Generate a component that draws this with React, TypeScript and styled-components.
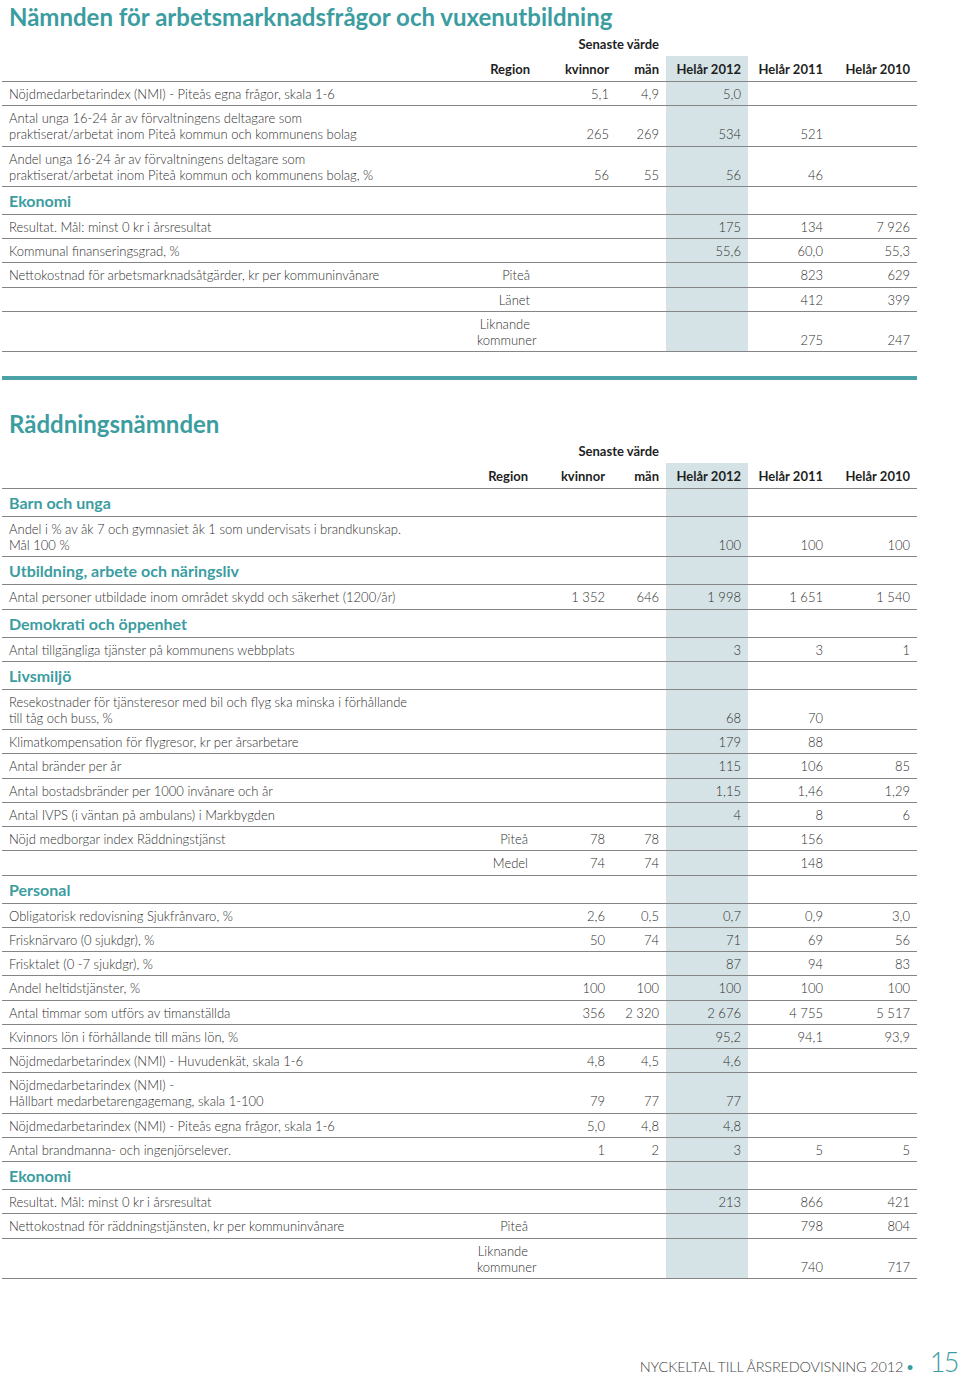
import React from "react";
import styled, { createGlobalStyle } from "styled-components";

const Global = createGlobalStyle`
  html, body { margin: 0; padding: 0; overflow: hidden; background: #fff; }
  body { font-family: "Lato", "Open Sans", sans-serif; color: #2b2b2b; }
`;

const TEAL = "#3c9da1";
const SHADE = "#d5e3e6";
const LINE = "#858585";

type DataRow = {
  kind: "data";
  label: string[];
  region?: string[];
  v: [string, string, string, string, string];
};
type SectionRow = { kind: "section"; label: string };
type Row = DataRow | SectionRow;

const d = (label: string[], v: [string, string, string, string, string], region?: string[]): DataRow => ({
  kind: "data",
  label,
  v,
  region,
});
const s = (label: string): SectionRow => ({ kind: "section", label });

const table1: Row[] = [
  d(["Nöjdmedarbetarindex (NMI) - Piteås egna frågor, skala 1-6"], ["5,1", "4,9", "5,0", "", ""]),
  d(
    ["Antal unga 16-24 år av förvaltningens deltagare som", "praktiserat/arbetat inom Piteå kommun och kommunens bolag"],
    ["265", "269", "534", "521", ""]
  ),
  d(
    ["Andel unga 16-24 år av förvaltningens deltagare som", "praktiserat/arbetat inom Piteå kommun och kommunens bolag, %"],
    ["56", "55", "56", "46", ""]
  ),
  s("Ekonomi"),
  d(["Resultat. Mål: minst 0 kr i årsresultat"], ["", "", "175", "134", "7 926"]),
  d(["Kommunal finanseringsgrad, %"], ["", "", "55,6", "60,0", "55,3"]),
  d(["Nettokostnad för arbetsmarknadsåtgärder, kr per kommuninvånare"], ["", "", "", "823", "629"], ["Piteå"]),
  d([""], ["", "", "", "412", "399"], ["Länet"]),
  d([""], ["", "", "", "275", "247"], ["Liknande", "kommuner"]),
];

const table2: Row[] = [
  s("Barn och unga"),
  d(
    ["Andel i % av åk 7 och gymnasiet åk 1 som undervisats i brandkunskap.", "Mål 100 %"],
    ["", "", "100", "100", "100"]
  ),
  s("Utbildning, arbete och näringsliv"),
  d(["Antal personer utbildade inom området skydd och säkerhet (1200/år)"], ["1 352", "646", "1 998", "1 651", "1 540"]),
  s("Demokrati och öppenhet"),
  d(["Antal tillgängliga tjänster på kommunens webbplats"], ["", "", "3", "3", "1"]),
  s("Livsmiljö"),
  d(
    ["Resekostnader för tjänsteresor med bil och flyg ska minska i förhållande", "till tåg och buss, %"],
    ["", "", "68", "70", ""]
  ),
  d(["Klimatkompensation för flygresor, kr per årsarbetare"], ["", "", "179", "88", ""]),
  d(["Antal bränder per år"], ["", "", "115", "106", "85"]),
  d(["Antal bostadsbränder per 1000 invånare och år"], ["", "", "1,15", "1,46", "1,29"]),
  d(["Antal IVPS (i väntan på ambulans) i Markbygden"], ["", "", "4", "8", "6"]),
  d(["Nöjd medborgar index Räddningstjänst"], ["78", "78", "", "156", ""], ["Piteå"]),
  d([""], ["74", "74", "", "148", ""], ["Medel"]),
  s("Personal"),
  d(["Obligatorisk redovisning Sjukfrånvaro, %"], ["2,6", "0,5", "0,7", "0,9", "3,0"]),
  d(["Frisknärvaro (0 sjukdgr), %"], ["50", "74", "71", "69", "56"]),
  d(["Frisktalet (0 -7 sjukdgr), %"], ["", "", "87", "94", "83"]),
  d(["Andel heltidstjänster, %"], ["100", "100", "100", "100", "100"]),
  d(["Antal timmar som utförs av timanställda"], ["356", "2 320", "2 676", "4 755", "5 517"]),
  d(["Kvinnors lön i förhållande till mäns lön, %"], ["", "", "95,2", "94,1", "93,9"]),
  d(["Nöjdmedarbetarindex (NMI) - Huvudenkät, skala 1-6"], ["4,8", "4,5", "4,6", "", ""]),
  d(["Nöjdmedarbetarindex (NMI) -", "Hållbart medarbetarengagemang, skala 1-100"], ["79", "77", "77", "", ""]),
  d(["Nöjdmedarbetarindex (NMI) - Piteås egna frågor, skala 1-6"], ["5,0", "4,8", "4,8", "", ""]),
  d(["Antal brandmanna- och ingenjörselever."], ["1", "2", "3", "5", "5"]),
  s("Ekonomi"),
  d(["Resultat. Mål: minst 0 kr i årsresultat"], ["", "", "213", "866", "421"]),
  d(["Nettokostnad för räddningstjänsten, kr per kommuninvånare"], ["", "", "", "798", "804"], ["Piteå"]),
  d([""], ["", "", "", "740", "717"], ["Liknande", "kommuner"]),
];

const Page = styled.div`
  width: 960px;
  height: 1377px;
  box-sizing: border-box;
  padding: 2px 0 0 2px;
  display: flex;
  flex-direction: column;
`;

const Title = styled.h1<{ $top?: number }>`
  margin: ${(p) => p.$top ?? 0}px 0 0 7px;
  font-family: "Lato", sans-serif;
  font-weight: 700;
  font-size: 24px;
  line-height: 30px;
  color: ${TEAL};
`;

const Table = styled.table`
  width: 915px;
  border-collapse: collapse;
  table-layout: fixed;
  font-size: 13px;
  line-height: 16px;
`;

const Cell = styled.td<{ $shade?: boolean; $left?: boolean }>`
  padding: 4px 7px 3.25px 7px;
  vertical-align: bottom;
  text-align: ${(p) => (p.$left ? "left" : "right")};
  white-space: nowrap;
  font-weight: 300;
  color: #2f2f2f;
  background: ${(p) => (p.$shade ? SHADE : "transparent")};
  border-bottom: 1px solid ${LINE};
`;

const HeadCell = styled.th<{ $shade?: boolean }>`
  padding: 5px 7px 4px 7px;
  vertical-align: bottom;
  text-align: right;
  white-space: nowrap;
  font-weight: 700;
  font-size: 13px;
  color: #1f1f1f;
  background: ${(p) => (p.$shade ? SHADE : "transparent")};
  border-bottom: 1px solid ${LINE};
`;

const SenasteCell = styled.th`
  padding: 4px 7px 4px 0;
  text-align: right;
  font-weight: 700;
  font-size: 13px;
  color: #1f1f1f;
  white-space: nowrap;
`;

const SectionLabel = styled.td`
  padding: 4px 7px 3px 7px;
  font-size: 16px;
  line-height: 20px;
  font-weight: 700;
  color: ${TEAL};
  white-space: nowrap;
  border-bottom: 1px solid ${LINE};
`;

const Divider = styled.div`
  width: 915px;
  height: 4px;
  background: #4aa2a6;
  margin-top: 24px;
`;

const Footer = styled.div`
  margin-top: auto;
  display: flex;
  justify-content: flex-end;
  align-items: baseline;
  height: 29px;
  padding-right: 2px;
`;

const FooterText = styled.span`
  font-family: "Lato", sans-serif;
  font-weight: 300;
  font-size: 14.5px;
  line-height: 20px;
  color: #444;
  letter-spacing: -0.2px;
`;

const Bullet = styled.span`
  color: ${TEAL};
  font-size: 13px;
  line-height: 20px;
  margin: 0 16px 0 3px;
`;

const PageNo = styled.span`
  font-family: "Lato", sans-serif;
  font-weight: 300;
  font-size: 27px;
  line-height: 28px;
  letter-spacing: -1.5px;
  color: ${TEAL};
`;

const Lines = ({ lines }: { lines: string[] }) => (
  <>
    {lines.map((l, i) => (
      <React.Fragment key={i}>
        {i > 0 && <br />}
        {l}
      </React.Fragment>
    ))}
  </>
);

const KeyTable = ({ rows, cols }: { rows: Row[]; cols: number[] }) => (
  <Table>
    <colgroup>
      {cols.map((w, i) => (
        <col key={i} style={{ width: w }} />
      ))}
    </colgroup>
    <thead>
      <tr>
        <th />
        <th />
        <SenasteCell colSpan={2}>Senaste värde</SenasteCell>
        <th />
        <th />
        <th />
      </tr>
      <tr>
        <HeadCell />
        <HeadCell>Region</HeadCell>
        <HeadCell>kvinnor</HeadCell>
        <HeadCell>män</HeadCell>
        <HeadCell $shade>Helår 2012</HeadCell>
        <HeadCell>Helår 2011</HeadCell>
        <HeadCell>Helår 2010</HeadCell>
      </tr>
    </thead>
    <tbody>
      {rows.map((r, i) =>
        r.kind === "section" ? (
          <tr key={i}>
            <SectionLabel colSpan={4}>{r.label}</SectionLabel>
            <Cell $shade />
            <Cell />
            <Cell />
          </tr>
        ) : (
          <tr key={i}>
            <Cell $left>
              <Lines lines={r.label} />
            </Cell>
            <Cell>{r.region ? <Lines lines={r.region} /> : null}</Cell>
            <Cell>{r.v[0]}</Cell>
            <Cell>{r.v[1]}</Cell>
            <Cell $shade>{r.v[2]}</Cell>
            <Cell>{r.v[3]}</Cell>
            <Cell>{r.v[4]}</Cell>
          </tr>
        )
      )}
    </tbody>
  </Table>
);

export default function App() {
  return (
    <>
      <Global />
      <Page>
        <Title>Nämnden för arbetsmarknadsfrågor och vuxenutbildning</Title>
        <KeyTable rows={table1} cols={[468, 67, 79, 50, 82, 82, 87]} />
        <Divider />
        <Title $top={29}>Räddningsnämnden</Title>
        <KeyTable rows={table2} cols={[468, 65, 77, 54, 82, 82, 87]} />
        <Footer>
          <FooterText>NYCKELTAL TILL ÅRSREDOVISNING 2012</FooterText>
          <Bullet>•</Bullet>
          <PageNo>15</PageNo>
        </Footer>
      </Page>
    </>
  );
}
